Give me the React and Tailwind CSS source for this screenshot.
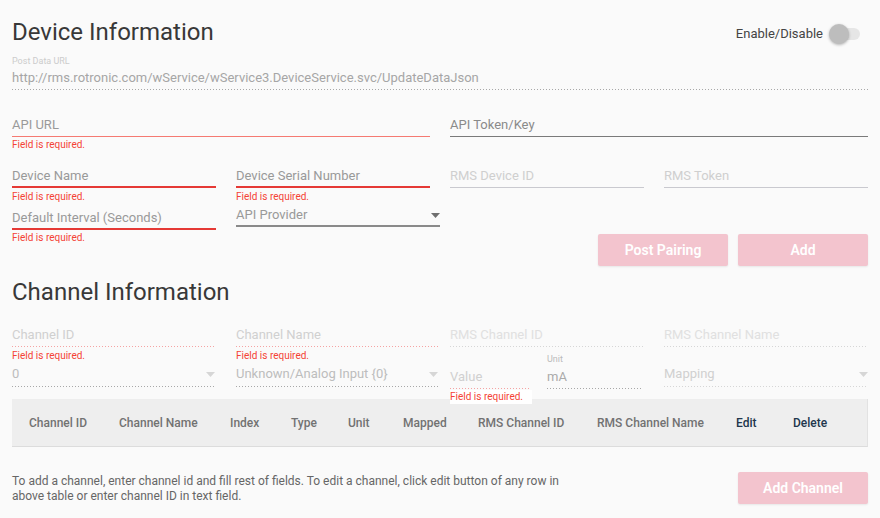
import React from "react";

function Dashed({ color = "gray", className = "" }) {
  const cls = {
    gray: "bg-[linear-gradient(to_right,#a8a8a8_0,#a8a8a8_50%,transparent_0)]",
    light: "bg-[linear-gradient(to_right,#d6d6d6_0,#d6d6d6_50%,transparent_0)]",
    pink: "bg-[linear-gradient(to_right,#f5a3a3_0,#f5a3a3_50%,transparent_0)]",
  }[color];
  return <div className={`h-px bg-[length:3px_1px] bg-repeat-x ${cls} ${className}`} />;
}

function Err({ className = "" }) {
  return (
    <div className={`text-[10px] leading-[12px] text-[#f44336] ${className}`}>Field is required.</div>
  );
}

function Arrow({ color = "#757575" }) {
  return (
    <svg width="9" height="5" viewBox="0 0 9 5" className="shrink-0">
      <polygon points="0,0 9,0 4.5,5" fill={color} />
    </svg>
  );
}

export default function App() {
  return (
    <div
      className="w-[880px] h-[518px] bg-[#fafafa] px-3 overflow-hidden"
      style={{ fontFamily: "Roboto, 'Liberation Sans', sans-serif" }}
    >
      {/* Header */}
      <div className="flex items-start justify-between pt-[18px]">
        <h1 className="text-[24px] leading-[28px] font-normal text-[#383838]">Device Information</h1>
        <div className="flex items-center mt-[6px] h-[20px] mr-[8px]">
          <span className="text-[13px] leading-[20px] text-[#444]">Enable/Disable</span>
          <div className="relative ml-[6px] w-[31px] h-[12px] rounded-full bg-[#e6e6e6]">
            <div className="absolute left-0 top-[-4px] w-[20px] h-[20px] rounded-full bg-[#bdbdbd] shadow-[0_1px_3px_rgba(0,0,0,0.3)]" />
          </div>
        </div>
      </div>

      {/* Post data url */}
      <div className="mt-[10px]">
        <div className="text-[9px] leading-[10px] text-[#cccccc]">Post Data URL</div>
        <div className="mt-[4px] text-[13px] leading-[16px] text-[#a6a6a6] pb-[3px]">
          http://rms.rotronic.com/wService/wService3.DeviceService.svc/UpdateDataJson
        </div>
        <Dashed color="gray" />
      </div>

      {/* Row A */}
      <div className="flex items-start mt-[27px]">
        <div className="w-[418px]">
          <div className="text-[13px] leading-[16px] text-[#999] pb-[3px] border-b border-[#f57a72]">API URL</div>
          <Err className="mt-[2px]" />
        </div>
        <div className="w-[418px] ml-[20px]">
          <div className="text-[13px] leading-[16px] text-[#8a8a8a] pb-[3px] border-b border-[#7a7a7a]">API Token/Key</div>
        </div>
      </div>

      {/* Row B */}
      <div className="flex items-start mt-[17px]">
        <div className="w-[204px]">
          <div className="text-[13px] leading-[16px] text-[#999] pb-[2px] border-b-2 border-[#e53935]">Device Name</div>
          <Err className="mt-[3px]" />
        </div>
        <div className="w-[194px] ml-[20px]">
          <div className="text-[13px] leading-[16px] text-[#999] pb-[2px] border-b-2 border-[#e53935]">Device Serial Number</div>
          <Err className="mt-[3px]" />
        </div>
        <div className="w-[194px] ml-[20px]">
          <div className="text-[13px] leading-[16px] text-[#cfcfcf] pb-[3px] border-b border-[#c9c9cf]">RMS Device ID</div>
        </div>
        <div className="w-[204px] ml-[20px]">
          <div className="text-[13px] leading-[16px] text-[#cfcfcf] pb-[3px] border-b border-[#c9c9cf]">RMS Token</div>
        </div>
      </div>

      {/* Row C */}
      <div className="flex items-start">
        <div className="w-[204px] mt-[7px]">
          <div className="text-[13px] leading-[16px] text-[#999] pb-[2px] border-b-2 border-[#e53935]">Default Interval (Seconds)</div>
          <Err className="mt-[2px]" />
        </div>
        <div className="w-[204px] ml-[20px] mt-[4px]">
          <div className="flex items-center justify-between text-[13px] leading-[16px] text-[#999] pb-[2px] border-b-2 border-[#8a8a8a]">
            <span>API Provider</span>
            <Arrow color="#6f6f6f" />
          </div>
        </div>
        <div className="ml-auto mt-[31px] flex gap-[10px]">
          <button className="w-[130px] h-[32px] rounded-[2px] bg-[#f3c4ce] text-white text-[14px] font-semibold shadow-[0_1px_2px_rgba(0,0,0,0.08)]">Post Pairing</button>
          <button className="w-[130px] h-[32px] rounded-[2px] bg-[#f3c4ce] text-white text-[14px] font-semibold shadow-[0_1px_2px_rgba(0,0,0,0.08)]">Add</button>
        </div>
      </div>

      {/* Channel Information */}
      <h2 className="mt-[12px] text-[24px] leading-[28px] font-normal text-[#383838]">Channel Information</h2>

      {/* Channel row 1 */}
      <div className="flex items-start mt-[21px] h-[35px]">
        <div className="w-[203px]">
          <div className="text-[13px] leading-[16px] text-[#d0d0d0] pb-[3px]">Channel ID</div>
          <Dashed color="pink" />
          <Err className="mt-[3px]" />
        </div>
        <div className="w-[202px] ml-[21px]">
          <div className="text-[13px] leading-[16px] text-[#d0d0d0] pb-[3px]">Channel Name</div>
          <Dashed color="pink" />
          <Err className="mt-[3px]" />
        </div>
        <div className="w-[193px] ml-[12px]">
          <div className="text-[13px] leading-[16px] text-[#e0e0e0] pb-[3px]">RMS Channel ID</div>
          <Dashed color="light" />
        </div>
        <div className="w-[204px] ml-[21px]">
          <div className="text-[13px] leading-[16px] text-[#e0e0e0] pb-[3px]">RMS Channel Name</div>
          <Dashed color="light" />
        </div>
      </div>

      {/* Channel row 2 */}
      <div className="flex items-start h-[37px]">
        <div className="w-[203px] mt-[4px]">
          <div className="flex items-center justify-between text-[13px] leading-[16px] text-[#bdbdbd] pb-[4px]">
            <span>0</span>
            <Arrow color="#d6d6d6" />
          </div>
          <Dashed color="gray" />
        </div>
        <div className="w-[202px] ml-[21px] mt-[4px]">
          <div className="flex items-center justify-between text-[13px] leading-[16px] text-[#bdbdbd] pb-[4px]">
            <span>Unknown/Analog Input {"{0}"}</span>
            <Arrow color="#d6d6d6" />
          </div>
          <Dashed color="gray" />
        </div>
        <div className="relative w-[81px] ml-[12px] mt-[7px]">
          <div className="text-[13px] leading-[16px] text-[#d0d0d0] pb-[3px]">Value</div>
          <Dashed color="pink" />
          <div className="absolute z-10 left-0 top-[21px] w-[82px] h-[14px] bg-white">
            <Err className="mt-[1px]" />
          </div>
        </div>
        <div className="w-[96px] ml-[16px] mt-[-8px]">
          <div className="text-[9px] leading-[10px] text-[#bbbbbb]">Unit</div>
          <div className="mt-[5px] text-[13px] leading-[16px] text-[#aaaaaa] pb-[3px]">mA</div>
          <Dashed color="gray" />
        </div>
        <div className="w-[204px] ml-[21px] mt-[4px]">
          <div className="flex items-center justify-between text-[13px] leading-[16px] text-[#d0d0d0] pb-[4px]">
            <span>Mapping</span>
            <Arrow color="#d6d6d6" />
          </div>
          <Dashed color="light" />
        </div>
      </div>

      {/* Table header */}
      <div className="h-[48px] bg-[#eeeeee] border-b border-[#dcdcdc] border-r border-r-[#e2e2e2] grid grid-cols-[90px_111px_61px_57px_55px_75px_119px_139px_57px_1fr] items-center pl-[17px] text-[12px] leading-[16px] font-medium text-[#727272]">
        <span>Channel ID</span>
        <span>Channel Name</span>
        <span>Index</span>
        <span>Type</span>
        <span>Unit</span>
        <span>Mapped</span>
        <span>RMS Channel ID</span>
        <span>RMS Channel Name</span>
        <span className="text-[#22364c]">Edit</span>
        <span className="text-[#22364c]">Delete</span>
      </div>

      {/* Bottom */}
      <div className="flex items-start justify-between">
        <p className="mt-[27px] w-[560px] text-[12px] leading-[15px] text-[#666]">
          To add a channel, enter channel id and fill rest of fields. To edit a channel, click edit button of any row in above table or enter channel ID in text field.
        </p>
        <button className="mt-[25px] w-[130px] h-[32px] rounded-[2px] bg-[#f3c4ce] text-white text-[14px] font-semibold shadow-[0_1px_2px_rgba(0,0,0,0.08)]">Add Channel</button>
      </div>
    </div>
  );
}
